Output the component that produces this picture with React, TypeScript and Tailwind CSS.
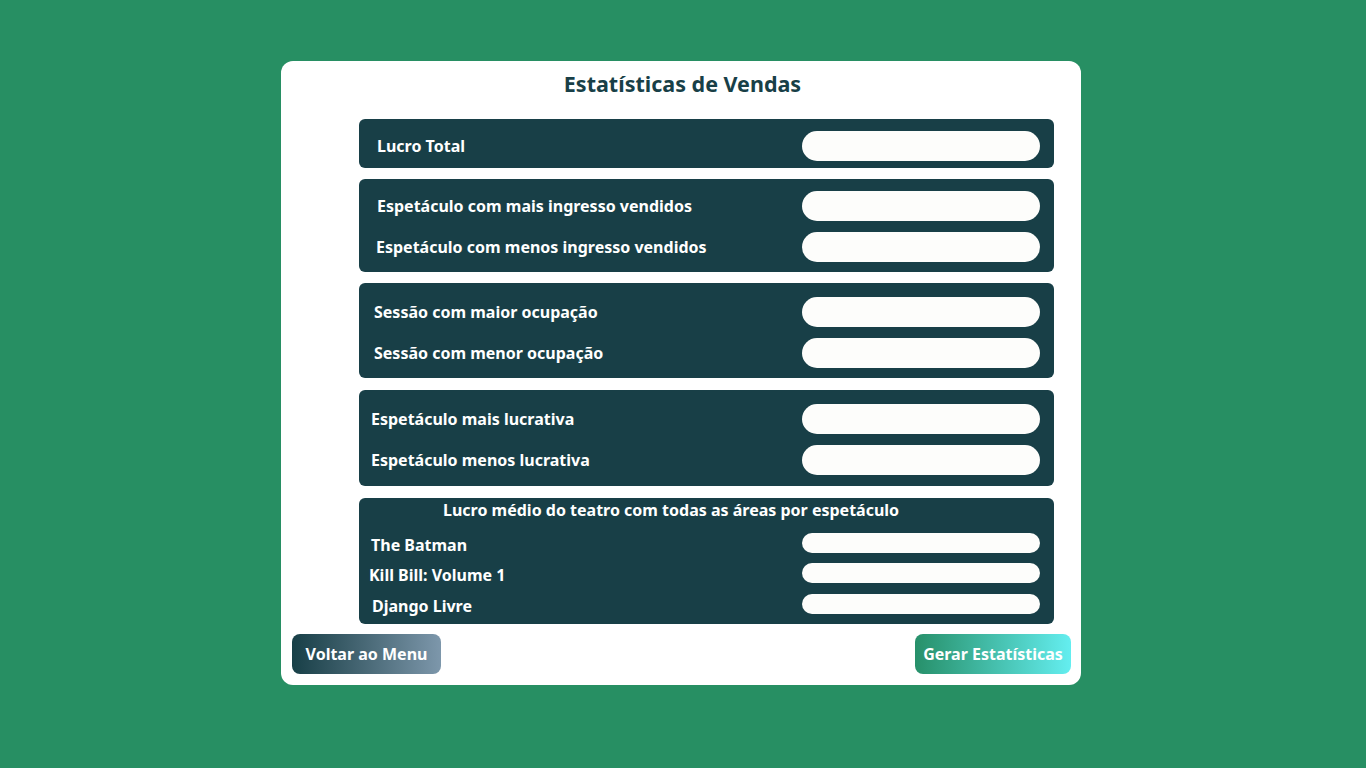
import React from "react";

interface RowProps {
  label: string;
  pl: string;
  small?: boolean;
}

const Row = ({ label, pl, small }: RowProps) => {
  return (
    <div className={`flex items-center justify-between ${small ? "h-[20px]" : "h-[30px]"}`}>
      <span className={`${pl} ${small ? "pt-[3px]" : "pt-0"} text-[16px] font-bold text-white leading-none`}>{label}</span>
      <div className={`w-[238px] bg-[#fdfdfb] rounded-full ${small ? "h-[20px]" : "h-[30px]"}`}></div>
    </div>
  );
};

export default function App() {
  return (
    <div
      className="min-h-screen w-full bg-[#278f63] flex justify-center pt-[61px] pr-[4px]"
      style={{ fontFamily: '"Noto Sans", "Open Sans", sans-serif' }}
    >
      <div className="w-[800px] h-[624px] bg-white rounded-xl pl-[11px] pr-[10px] pb-[11px] flex flex-col">
        <div className="h-[58px] flex items-center justify-center pb-[12px] pl-[2px]">
          <h1 className="text-[21.5px] font-bold text-[#183f47] leading-none">Estatísticas de Vendas</h1>
        </div>

        <div className="ml-[67px] w-[695px] flex flex-col">
          <div className="h-[49px] bg-[#183f47] rounded-md flex flex-col pt-[12px] pr-[14px]">
            <Row label="Lucro Total" pl="pl-[18px]" />
          </div>

          <div className="mt-[11px] h-[93px] bg-[#183f47] rounded-md flex flex-col pt-[12px] gap-[11px] pr-[14px]">
            <Row label="Espetáculo com mais ingresso vendidos" pl="pl-[18px]" />
            <Row label="Espetáculo com menos ingresso vendidos" pl="pl-[17px]" />
          </div>

          <div className="mt-[11px] h-[95px] bg-[#183f47] rounded-md flex flex-col pt-[14px] gap-[11px] pr-[14px]">
            <Row label="Sessão com maior ocupação" pl="pl-[15px]" />
            <Row label="Sessão com menor ocupação" pl="pl-[15px]" />
          </div>

          <div className="mt-[12px] h-[96px] bg-[#183f47] rounded-md flex flex-col pt-[14px] gap-[11px] pr-[14px]">
            <Row label="Espetáculo mais lucrativa" pl="pl-[12px]" />
            <Row label="Espetáculo menos lucrativa" pl="pl-[12px]" />
          </div>

          <div className="mt-[12px] h-[126px] bg-[#183f47] rounded-md flex flex-col pr-[14px]">
            <div className="h-[24px] flex items-center pl-[84px]">
              <span className="text-[16px] font-bold text-white leading-none">
                Lucro médio do teatro com todas as áreas por espetáculo
              </span>
            </div>
            <div className="flex flex-col mt-[11px]">
              <Row label="The Batman" pl="pl-[12px]" small />
              <div className="mt-[10px]">
                <Row label="Kill Bill: Volume 1" pl="pl-[10px]" small />
              </div>
              <div className="mt-[11px]">
                <Row label="Django Livre" pl="pl-[13px]" small />
              </div>
            </div>
          </div>
        </div>

        <div className="mt-auto flex justify-between items-end">
          <button className="h-[40px] w-[149px] rounded-lg bg-gradient-to-r from-[#173f47] to-[#7d97ab] text-white text-[16px] font-bold">
            Voltar ao Menu
          </button>
          <button className="h-[40px] w-[156px] rounded-lg bg-gradient-to-r from-[#27906a] to-[#64eef0] text-white text-[16px] font-bold">
            Gerar Estatísticas
          </button>
        </div>
      </div>
    </div>
  );
}
